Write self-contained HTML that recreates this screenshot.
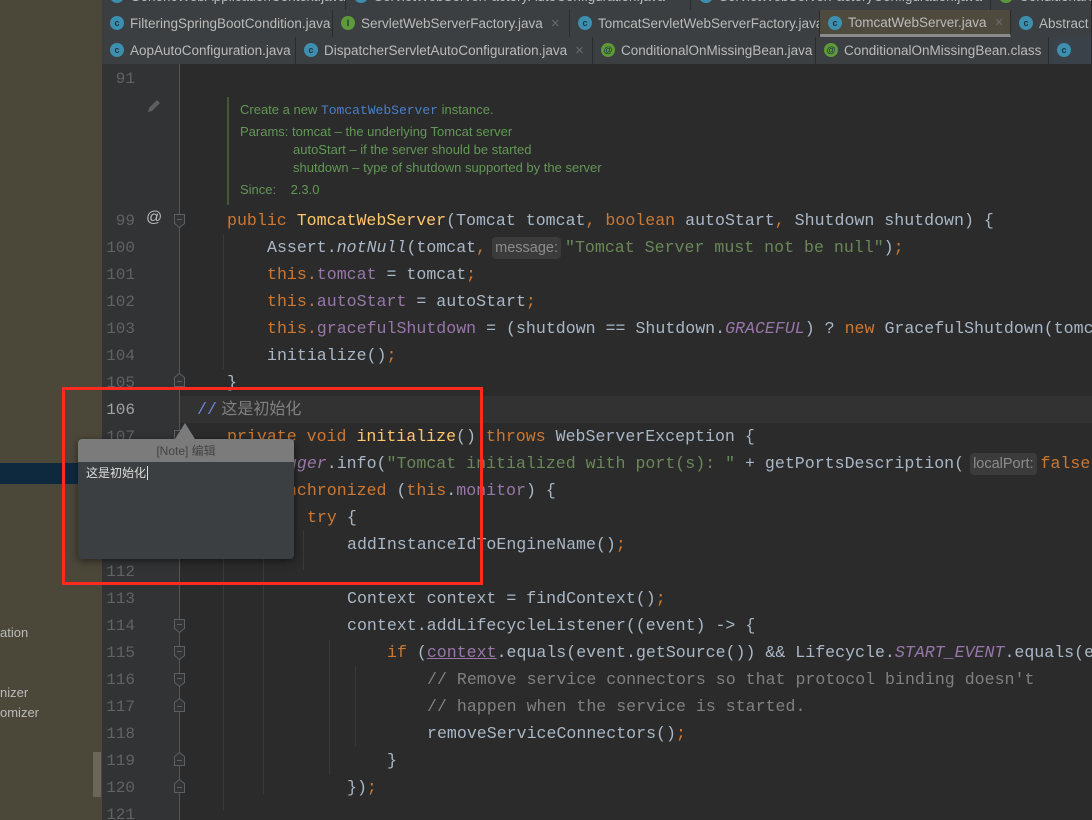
<!DOCTYPE html>
<html style="width:1092px;height:820px;overflow:hidden"><head><meta charset="utf-8">
<style>
*{margin:0;padding:0;box-sizing:border-box}
body{width:1092px;height:820px;overflow:hidden;background:#2b2b2b;position:relative;font-family:"Liberation Sans","Noto Sans CJK SC",sans-serif}
.side{position:absolute;left:0;top:0;width:102px;height:820px;background:#4b4739}
.side .t{position:absolute;left:0;color:#bbb;font-size:13px;white-space:nowrap}
.tabs{position:absolute;left:102px;top:0;width:990px;height:64px;background:#3c3f41}
.tab{position:absolute;height:27px;border-right:1px solid #2b2b2b;color:#bbbbbb;font-size:13.5px;line-height:28px;padding-left:28px;white-space:nowrap;overflow:hidden}
.tab i{position:absolute;left:8px;top:6px;width:14px;height:14px;border-radius:50%;background:#3d8fb0;color:#1e3440;font-style:normal;font-size:9px;line-height:14px;text-align:center;font-weight:bold}
.tab i.g{background:#5f9a3a}
.tab b{font-weight:normal;color:#6a6a6a;margin-left:8px;font-size:15px}
.row0{top:-17px}.row1{top:10px}.row2{top:37px}
.gut{position:absolute;left:102px;top:64px;width:77px;height:756px;background:#313335}
.gline{position:absolute;left:179px;top:64px;width:1px;height:756px;background:#555}
.ln{position:absolute;left:102px;width:33px;text-align:right;color:#606366;font-family:"Liberation Mono",monospace;font-size:16px;line-height:27px;height:27px;padding-top:1px}
.code{position:absolute;font-family:"Liberation Mono",monospace;font-size:16.6px;line-height:27px;color:#a9b7c6;white-space:pre;height:27px}
.k{color:#cc7832}.f{color:#9876aa}.s{color:#6a8759}.m{color:#ffc66d}.c{color:#808080}.it{font-style:italic}
.hint{display:inline-block;background:#3b3b3b;color:#8c8c8c;font-family:"Liberation Sans",sans-serif;font-size:14.5px;border-radius:4px;padding:0 3px;line-height:22px;margin:0 4px 0 6px}
.fold{position:absolute;left:173px}
.guide{position:absolute;width:1px;background:#393939}
.doc{position:absolute;left:240px;color:#629755;font-size:13px;white-space:pre}
</style></head><body>
<div class="side">
 <div style="position:absolute;left:0;top:463px;width:102px;height:21px;background:#0e293e"></div>
 <div class="t" style="top:625px">ation</div>
 <div class="t" style="top:685px">nizer</div>
 <div class="t" style="top:705px">omizer</div>
 <div style="position:absolute;left:93px;top:752px;width:8px;height:45px;background:#6a665c"></div>
</div>
<div class="tabs">
 <div class="tab row0" style="left:0;width:244px"><i>c</i>GenericWebApplicationContext.java<b>×</b></div>
 <div class="tab row0" style="left:244px;width:345px"><i>c</i>ServletWebServerFactoryAutoConfiguration.java<b>×</b></div>
 <div class="tab row0" style="left:589px;width:300px"><i>c</i>ServletWebServerFactoryConfiguration.java<b>×</b></div>
 <div class="tab row0" style="left:889px;width:101px"><i class="g">@</i>ConditionalOn</div>
 <div class="tab row1" style="left:0;width:231px"><i>c</i>FilteringSpringBootCondition.java<b>×</b></div>
 <div class="tab row1" style="left:231px;width:237px"><i class="g">I</i>ServletWebServerFactory.java<b>×</b></div>
 <div class="tab row1" style="left:468px;width:250px"><i>c</i>TomcatServletWebServerFactory.java<b>×</b></div>
 <div class="tab row1" style="left:718px;width:191px;background:#4e4a3e;border-bottom:3px solid #8a8a8a;line-height:26px"><i>c</i>TomcatWebServer.java<b>×</b></div>
 <div class="tab row1" style="left:909px;width:81px"><i>c</i>Abstract</div>
 <div class="tab row2" style="left:0;width:194px"><i>c</i>AopAutoConfiguration.java<b>×</b></div>
 <div class="tab row2" style="left:194px;width:297px"><i>c</i>DispatcherServletAutoConfiguration.java<b>×</b></div>
 <div class="tab row2" style="left:491px;width:223px"><i class="g">@</i>ConditionalOnMissingBean.java<b>×</b></div>
 <div class="tab row2" style="left:714px;width:233px"><i class="g">@</i>ConditionalOnMissingBean.class<b>×</b></div>
 <div class="tab row2" style="left:947px;width:43px;background:#3a4148"><i>c</i></div>
</div>
<div class="gut"></div>
<div style="position:absolute;left:180px;top:396px;width:912px;height:27px;background:#323232"></div>
<div class="gline"></div>
<div class="guide" style="left:223px;top:234px;height:135px"></div>
<div class="guide" style="left:223px;top:450px;height:360px"></div>
<div class="guide" style="left:263px;top:504px;height:290px"></div>
<div class="guide" style="left:303px;top:530px;height:40px"></div>
<div class="guide" style="left:329px;top:640px;height:135px"></div>
<div class="guide" style="left:355px;top:666px;height:80px"></div>

<div class="ln" style="top:65px">91</div>
<svg style="position:absolute;left:146px;top:98px" width="16" height="16"><path d="M2 14 L3 10 L11 2 L14 5 L6 13 Z" fill="#5e6060"/></svg>
<div style="position:absolute;left:227px;top:97px;width:2px;height:108px;background:#3f5a34"></div>
<div class="doc" style="top:102px">Create a new <span style="color:#4a7fc7;font-family:'Liberation Mono',monospace">TomcatWebServer</span> instance.</div>
<div class="doc" style="top:124px">Params: tomcat – the underlying Tomcat server</div>
<div class="doc" style="top:142px;left:293px">autoStart – if the server should be started</div>
<div class="doc" style="top:160px;left:293px">shutdown – type of shutdown supported by the server</div>
<div class="doc" style="top:182px">Since:    2.3.0</div>

<div class="ln" style="top:207px">99</div>
<div style="position:absolute;left:146px;top:209px;color:#bbb;font-size:16px">@</div>
<div class="ln" style="top:234px">100</div>
<div class="ln" style="top:261px">101</div>
<div class="ln" style="top:288px">102</div>
<div class="ln" style="top:315px">103</div>
<div class="ln" style="top:342px">104</div>
<div class="ln" style="top:369px">105</div>
<div class="ln" style="top:396px;color:#a4a3a3">106</div>
<div class="ln" style="top:423px">107</div>
<div class="ln" style="top:558px">112</div>
<div class="ln" style="top:585px">113</div>
<div class="ln" style="top:612px">114</div>
<div class="ln" style="top:639px">115</div>
<div class="ln" style="top:666px">116</div>
<div class="ln" style="top:693px">117</div>
<div class="ln" style="top:720px">118</div>
<div class="ln" style="top:747px">119</div>
<div class="ln" style="top:774px">120</div>
<div class="ln" style="top:801px">121</div>

<!-- fold markers: down = block start, up = block end -->
<svg class="fold" style="top:213px" width="13" height="16"><path d="M1.5 1.5H11.5V10.5L6.5 14.5L1.5 10.5Z M4 6.5H9" fill="#313335" stroke="#5f5f5f"/></svg>
<svg class="fold" style="top:372px" width="13" height="16"><path d="M1.5 14.5H11.5V5.5L6.5 1.5L1.5 5.5Z M4 9.5H9" fill="#313335" stroke="#5f5f5f"/></svg>
<svg class="fold" style="top:429px" width="13" height="16"><path d="M1.5 1.5H11.5V10.5L6.5 14.5L1.5 10.5Z M4 6.5H9" fill="#313335" stroke="#5f5f5f"/></svg>
<svg class="fold" style="top:618px" width="13" height="16"><path d="M1.5 1.5H11.5V10.5L6.5 14.5L1.5 10.5Z M4 6.5H9" fill="#313335" stroke="#5f5f5f"/></svg>
<svg class="fold" style="top:645px" width="13" height="16"><path d="M1.5 1.5H11.5V10.5L6.5 14.5L1.5 10.5Z M4 6.5H9" fill="#313335" stroke="#5f5f5f"/></svg>
<svg class="fold" style="top:672px" width="13" height="16"><path d="M1.5 1.5H11.5V10.5L6.5 14.5L1.5 10.5Z M4 6.5H9" fill="#313335" stroke="#5f5f5f"/></svg>
<svg class="fold" style="top:697px" width="13" height="16"><path d="M1.5 14.5H11.5V5.5L6.5 1.5L1.5 5.5Z M4 9.5H9" fill="#313335" stroke="#5f5f5f"/></svg>
<svg class="fold" style="top:751px" width="13" height="16"><path d="M1.5 14.5H11.5V5.5L6.5 1.5L1.5 5.5Z M4 9.5H9" fill="#313335" stroke="#5f5f5f"/></svg>
<svg class="fold" style="top:778px" width="13" height="16"><path d="M1.5 14.5H11.5V5.5L6.5 1.5L1.5 5.5Z M4 9.5H9" fill="#313335" stroke="#5f5f5f"/></svg>

<div class="code" style="left:227px;top:207px"><span class="k">public </span><span class="m">TomcatWebServer</span>(Tomcat tomcat<span class="k">, boolean </span>autoStart<span class="k">, </span>Shutdown shutdown) {</div>
<div class="code" style="left:267px;top:234px">Assert.<span class="it">notNull</span>(tomcat<span class="k">,</span><span class="hint">message:</span><span class="s">"Tomcat Server must not be null"</span>)<span class="k">;</span></div>
<div class="code" style="left:267px;top:261px"><span class="k">this.</span><span class="f">tomcat</span> = tomcat<span class="k">;</span></div>
<div class="code" style="left:267px;top:288px"><span class="k">this.</span><span class="f">autoStart</span> = autoStart<span class="k">;</span></div>
<div class="code" style="left:267px;top:315px"><span class="k">this.</span><span class="f">gracefulShutdown</span> = (shutdown == Shutdown.<span class="f it">GRACEFUL</span>) ? <span class="k">new </span>GracefulShutdown(tomcat)</div>
<div class="code" style="left:267px;top:342px">initialize()<span class="k">;</span></div>
<div class="code" style="left:227px;top:369px">}</div>
<div class="code" style="left:197px;top:396px"><span style="color:#6c87d6">//</span><span class="c" style="font-family:'Liberation Sans','Noto Sans CJK SC',sans-serif;font-size:16px"> 这是初始化</span></div>
<div class="code" style="left:227px;top:423px"><span class="k">private void </span><span class="m">initialize</span>() <span class="k">throws </span>WebServerException {</div>
<div class="code" style="left:267px;top:450px"><span class="f it">logger</span>.info(<span class="s">"Tomcat initialized with port(s): "</span> + getPortsDescription(<span class="hint">localPort:</span><span class="k">false</span></div>
<div class="code" style="left:267px;top:477px"><span class="k">synchronized </span>(<span class="k">this</span>.<span class="f">monitor</span>) {</div>
<div class="code" style="left:307px;top:504px"><span class="k">try </span>{</div>
<div class="code" style="left:347px;top:531px">addInstanceIdToEngineName()<span class="k">;</span></div>
<div class="code" style="left:347px;top:585px">Context context = findContext()<span class="k">;</span></div>
<div class="code" style="left:347px;top:612px">context.addLifecycleListener((event) -&gt; {</div>
<div class="code" style="left:387px;top:639px"><span class="k">if </span>(<span class="f" style="text-decoration:underline">context</span>.equals(event.getSource()) &amp;&amp; Lifecycle.<span class="f it">START_EVENT</span>.equals(event</div>
<div class="code c" style="left:427px;top:666px">// Remove service connectors so that protocol binding doesn't</div>
<div class="code c" style="left:427px;top:693px">// happen when the service is started.</div>
<div class="code" style="left:427px;top:720px">removeServiceConnectors()<span class="k">;</span></div>
<div class="code" style="left:387px;top:747px">}</div>
<div class="code" style="left:347px;top:774px">})<span class="k">;</span></div>

<!-- note popup -->
<div style="position:absolute;left:78px;top:439px;width:216px;height:120px;background:#3c3f41;border-radius:4px;box-shadow:0 2px 8px rgba(0,0,0,.5);overflow:hidden">
 <div style="height:23px;background:#7b7b7b;color:#444;font-size:12px;text-align:center;line-height:25px">[Note] 编辑</div>
 <div style="color:#ddd;font-size:12px;padding:2px 8px">这是初始化<span style="border-left:1px solid #ddd;margin-left:1px"></span></div>
</div>
<div style="position:absolute;left:175px;top:423px;width:0;height:0;border-left:10px solid transparent;border-right:10px solid transparent;border-bottom:16px solid #7b7b7b"></div>
<!-- red box -->
<div style="position:absolute;left:62px;top:387px;width:421px;height:198px;border:3px solid #ff2a1f"></div>
</body></html>
